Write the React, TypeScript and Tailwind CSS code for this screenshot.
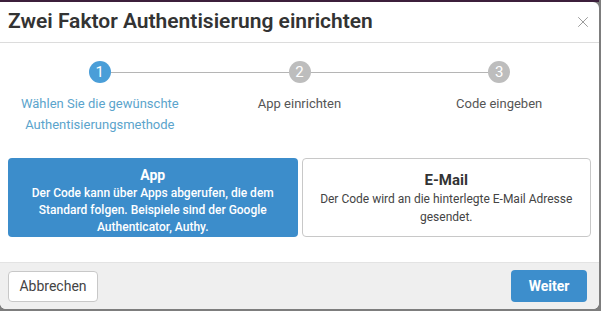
import { X } from "lucide-react";

const steps = [
  { n: 1, label: "Wählen Sie die gewünschte Authentisierungsmethode", active: true },
  { n: 2, label: "App einrichten", active: false },
  { n: 3, label: "Code eingeben", active: false },
];

function Stepper() {
  return (
    <div className="grid grid-cols-3 pt-[18px]">
      {steps.map((s, i) => (
        <div key={s.n} className="flex flex-col items-center">
          <div className="flex w-full items-center">
            <div className={`h-px flex-1 ${i === 0 ? "" : "bg-[#b5b5b5]"}`} />
            <div
              className={`flex h-[22px] w-[22px] items-center justify-center rounded-full text-[15px] text-white ${
                s.active ? "bg-[#4a9ed8]" : "bg-[#bdbdbd]"
              }`}
            >
              {s.n}
            </div>
            <div className={`h-px flex-1 ${i === steps.length - 1 ? "" : "bg-[#b5b5b5]"}`} />
          </div>
          <p
            className={`mt-[10px] max-w-[170px] text-center text-[13px] leading-[21px] ${
              s.active ? "text-[#5ba4cc]" : "text-[#555]"
            }`}
          >
            {s.label}
          </p>
        </div>
      ))}
    </div>
  );
}

export default function App() {
  return (
    <div
      className="h-[311px] w-[601px] overflow-hidden bg-[#7d7d7d] pt-[2px] pr-[2px]"
      style={{ fontFamily: "Roboto, 'Noto Sans', sans-serif" }}
    >
      <div className="h-[2px] -mt-[2px] w-full bg-[#3c1f3b]" />
      <div className="flex h-[307px] w-[599px] flex-col overflow-hidden rounded-b-md rounded-tr-md bg-white">
        <div className="flex h-[41px] items-center justify-between border-b border-[#dcdcdc] pl-2 pr-[8px]">
          <h1 className="text-[21px] font-semibold text-[#333]">
            Zwei Faktor Authentisierung einrichten
          </h1>
          <X className="mr-[-1px] h-[18px] w-[18px] text-[#999]" strokeWidth={1.3} />
        </div>

        <Stepper />

        <div className="mt-[23px] grid grid-cols-2 gap-1 px-2">
          <button className="h-[79px] rounded-[4px] bg-[#3c8dcb] px-4 pt-[5px] text-center text-white">
            <div className="text-[14px] font-bold leading-5">App</div>
            <div className="text-[12px] font-medium leading-[17px]">
              Der Code kann über Apps abgerufen, die dem Standard folgen. Beispiele sind der Google
              Authenticator, Authy.
            </div>
          </button>
          <button className="flex h-[79px] flex-col items-center justify-center rounded-[4px] border border-[#c8c8c8] bg-white px-2 text-center text-[#333]">
            <div className="text-[15px] font-bold leading-5">E-Mail</div>
            <div className="text-[12px] leading-[18px] text-[#444]">
              Der Code wird an die hinterlegte E-Mail Adresse gesendet.
            </div>
          </button>
        </div>

        <div className="mt-auto flex h-[47px] items-center justify-between border-t border-[#e3e3e3] bg-[#efefef] pl-2 pr-3">
          <button className="h-[31px] w-[90px] rounded-[4px] border border-[#c8c8c8] bg-white text-[14px] text-[#444]">
            Abbrechen
          </button>
          <button className="h-[32px] w-[76px] rounded-[4px] bg-[#3d8ecc] text-[14px] font-bold text-white">
            Weiter
          </button>
        </div>
      </div>
    </div>
  );
}
